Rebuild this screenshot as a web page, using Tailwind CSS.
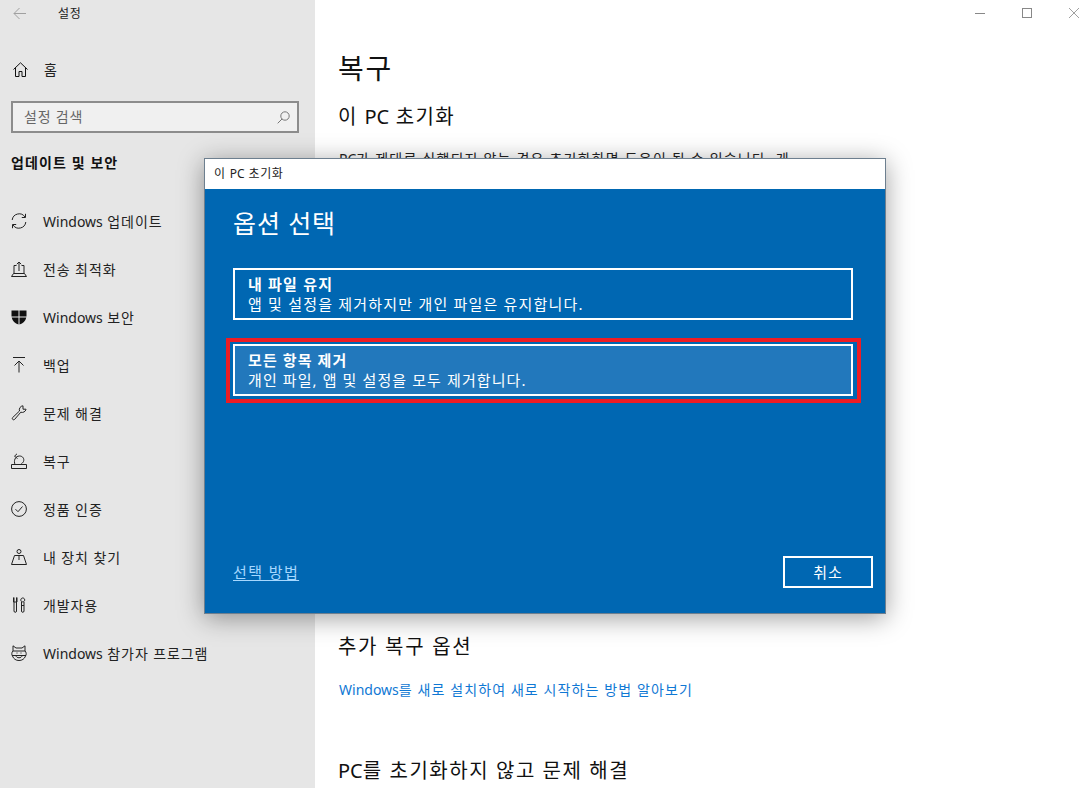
<!DOCTYPE html>
<html lang="ko">
<head>
  <meta charset="UTF-8" />
  <title>설정</title>
  <script src="https://cdn.jsdelivr.net/npm/@tailwindcss/browser@4"></script>
</head>
<body class="bg-white text-black font-['Noto_Sans','Noto_Sans_CJK_KR',sans-serif] overflow-hidden">
  <div class="relative w-[1092px] h-[793px] overflow-hidden">
    <div class="flex h-[788px]">
      <!-- sidebar -->
      <aside class="w-[315px] h-full bg-[#e6e6e6] shrink-0">
        <div class="h-[27px] flex items-center pl-[13px]">
          <svg class="w-[13px] h-[13px]" viewBox="0 0 13 13" fill="none" stroke="#a0a0a0" stroke-width="1"><path d="M13 6.5H1M6.5 1L1 6.5L6.5 12"/></svg>
          <span class="ml-[32px] text-[12px] tracking-[0.8px] text-[#222]">설정</span>
        </div>
        <div class="h-[48px] mt-[18px] flex items-center pl-[13px]">
          <svg class="w-[15px] h-[15px]" viewBox="0 0 15 15" fill="none" stroke="#111" stroke-width="1"><path d="M0.5 7.5L7.5 0.8L14.5 7.5M2.5 5.8V14.5H6V9.5H9V14.5H12.5V5.8"/></svg>
          <span class="ml-[16px] text-[14px] text-[#222]">홈</span>
        </div>
        <div class="ml-[11px] w-[288px] mt-[8px] h-[32px] border-2 border-[#8c8c8c] bg-[#f0f0f0] flex items-center justify-between pl-[11px] pr-[7px]">
          <span class="text-[14px] tracking-[0.8px] text-[#666] -mt-[2px]">설정 검색</span>
          <svg class="w-[13px] h-[13px]" viewBox="0 0 13 13" fill="none" stroke="#777" stroke-width="1"><circle cx="8" cy="5" r="4.2"/><path d="M5 8L0.7 12.3"/></svg>
        </div>
        <div class="pl-[11px] mt-[17px] h-[24px] flex items-center text-[14px] font-bold tracking-[1.1px] text-[#111]">업데이트 및 보안</div>
        <nav class="mt-[23px] text-[14px] tracking-[0.9px] text-[#222]">
          <div class="h-[48px] flex items-center pl-[11px]">
            <svg class="w-[16px] h-[16px] shrink-0" viewBox="0 0 16 16" fill="none" stroke="#222" stroke-width="1"><path d="M1.2 7A7 7 0 0 1 14 4M14.8 9A7 7 0 0 1 2 12M14.5 0.8V4.5H10.8M1.5 15.2V11.5H5.2"/></svg>
            <span class="ml-[16px]"><span class="tracking-normal">Windows</span> 업데이트</span>
          </div>
          <div class="h-[48px] flex items-center pl-[11px]">
            <svg class="w-[16px] h-[16px] shrink-0" viewBox="0 0 16 16" fill="none" stroke="#222" stroke-width="1"><path d="M0.5 15.5H15.5L13.5 12.5H13V4.5H10.5M5.5 4.5H3V12.5H2.5L0.5 15.5M3 12.5H13M8 10V1M5.8 3.2L8 1L10.2 3.2"/></svg>
            <span class="ml-[16px]">전송 최적화</span>
          </div>
          <div class="h-[48px] flex items-center pl-[11px]">
            <svg class="w-[16px] h-[16px] shrink-0" viewBox="0 0 16 16" fill="#111"><path d="M0.5 1.5H7.5V7.5H0.5ZM8.5 1.5H15.5V7.5H8.5ZM0.7 8.5H7.5V15.5C4 14.5 1.5 12 0.7 8.5ZM8.5 8.5H15.3C14.5 12 12 14.5 8.5 15.5Z"/></svg>
            <span class="ml-[16px]"><span class="tracking-normal">Windows</span> 보안</span>
          </div>
          <div class="h-[48px] flex items-center pl-[11px]">
            <svg class="w-[16px] h-[16px] shrink-0" viewBox="0 0 16 16" fill="none" stroke="#222" stroke-width="1"><path d="M2 0.5H14M8 15.5V4M3.5 8.5L8 4L12.5 8.5"/></svg>
            <span class="ml-[16px]">백업</span>
          </div>
          <div class="h-[48px] flex items-center pl-[11px]">
            <svg class="w-[16px] h-[16px] shrink-0" viewBox="0 0 16 16" fill="none" stroke="#222" stroke-width="1"><path d="M15 4.5A4 4 0 0 1 9.8 7.2L3.5 14.5C2.5 15.5 0.5 14 1.5 12.7L8.5 6A4 4 0 0 1 12 0.8V4.2H15Z"/></svg>
            <span class="ml-[16px]">문제 해결</span>
          </div>
          <div class="h-[48px] flex items-center pl-[11px]">
            <svg class="w-[16px] h-[16px] shrink-0" viewBox="0 0 16 16" fill="none" stroke="#222" stroke-width="1"><path d="M0.5 15.5V11.5H15.5V15.5ZM4 11.5C2.5 8 4 3 8.5 3C12 3 13.5 6 12.5 8.5C12 9.5 11 10.5 9.5 11.5M6 0.8L3.5 3.2L6.5 5.5"/></svg>
            <span class="ml-[16px]">복구</span>
          </div>
          <div class="h-[48px] flex items-center pl-[11px]">
            <svg class="w-[16px] h-[16px] shrink-0" viewBox="0 0 16 16" fill="none" stroke="#222" stroke-width="1"><circle cx="8" cy="8" r="7.4"/><path d="M4.5 8.2L7 10.7L11.5 5.5"/></svg>
            <span class="ml-[16px]">정품 인증</span>
          </div>
          <div class="h-[48px] flex items-center pl-[11px]">
            <svg class="w-[16px] h-[16px] shrink-0" viewBox="0 0 16 16" fill="none" stroke="#222" stroke-width="1"><circle cx="8" cy="2.5" r="2"/><path d="M0.5 15.5H15.5L12.5 6.5H3.5ZM8 6.5V11"/></svg>
            <span class="ml-[16px]">내 장치 찾기</span>
          </div>
          <div class="h-[48px] flex items-center pl-[11px]">
            <svg class="w-[16px] h-[16px] shrink-0" viewBox="0 0 16 16" fill="none" stroke="#222" stroke-width="1"><path d="M3 0.5V5M5.5 0.5V5M2.5 0.5V5H6V0.5M3 5V14C3 15.8 5.5 15.8 5.5 14V5M10.5 5V14C10.5 15.8 13 15.8 13 14V5M9.8 3C9.8 0.3 13.7 0.3 13.7 3C13.7 5.5 9.8 5.5 9.8 3M10.5 8.5H13"/></svg>
            <span class="ml-[16px]">개발자용</span>
          </div>
          <div class="h-[48px] flex items-center pl-[11px]">
            <svg class="w-[16px] h-[16px] shrink-0" viewBox="0 0 16 16" fill="none" stroke="#222" stroke-width="1"><path d="M2 0.8L5 3H11L14 0.8V6C15.5 7 15.5 10 14.5 11C13.5 14 11 15.5 8 15.5C5 15.5 2.5 14 1.5 11C0.5 10 0.5 7 2 6ZM2 6H14M1 10.5H15M5 10.5C5 13.5 11 13.5 11 10.5"/><path d="M6 7.5V8.5M10 7.5V8.5"/></svg>
            <span class="ml-[16px]"><span class="tracking-normal">Windows</span> 참가자 프로그램</span>
          </div>
        </nav>
      </aside>
      <!-- main -->
      <main class="flex-1 pl-[24px] relative">
        <div class="absolute top-0 right-[13px] flex items-center gap-[37px] h-[26px]">
          <span class="block w-[10px] h-px bg-[#888]"></span>
          <span class="block w-[10px] h-[10px] border border-[#888]"></span>
          <svg class="w-[10px] h-[10px]" viewBox="0 0 10 10" stroke="#888" stroke-width="0.8"><path d="M0 0L10 10M10 0L0 10"/></svg>
        </div>
        <h1 class="mt-[47px] -ml-[1px] h-[42px] leading-[42px] text-[28px] tracking-[1.8px] text-[#111]">복구</h1>
        <h2 class="mt-[14px] -ml-[1px] h-[28px] leading-[28px] text-[20px] tracking-[1.4px] text-[#111]">이 <span class="tracking-normal">PC</span> 초기화</h2>
        <p class="mt-[16px] h-[24px] leading-[24px] text-[14px] tracking-[1.2px] text-[#222] whitespace-nowrap"><span class="tracking-normal">PC</span>가 제대로 실행되지 않는 경우 초기화하면 도움이 될 수 있습니다. 게</p>
        <h2 class="mt-[462px] -ml-[1px] h-[28px] leading-[28px] text-[20px] tracking-[1.7px] text-[#111]">추가 복구 옵션</h2>
        <p class="mt-[18px] h-[22px] leading-[22px] text-[14px] tracking-[1.1px] text-[#0f78d4]"><span class="tracking-normal">Windows</span>를 새로 설치하여 새로 시작하는 방법 알아보기</p>
        <h2 class="mt-[56px] -ml-[1px] h-[28px] leading-[28px] text-[20px] tracking-[1.55px] text-[#111]"><span class="tracking-normal">PC</span>를 초기화하지 않고 문제 해결</h2>
      </main>
    </div>
    <!-- dialog -->
    <div class="absolute left-[204px] top-[158px] w-[682px] h-[456px] border border-[#6d7f8f] bg-[#0067b2] shadow-[0_4px_24px_rgba(0,0,0,0.38)] flex flex-col">
      <div class="h-[30px] bg-white flex items-center pl-[9px] text-[12px] tracking-[0.6px] text-[#222] shrink-0">이 <span class="tracking-normal mx-[4px]">PC</span> 초기화</div>
      <div class="flex-1 flex flex-col pl-[28px] pr-[32px] text-white">
        <h3 class="mt-[16px] h-[36px] leading-[36px] text-[25px] tracking-[0.9px]">옵션 선택</h3>
        <div class="mt-[27px] h-[52px] border-2 border-white pl-[13px] flex flex-col justify-center text-[15px] tracking-[1.2px] leading-[20px] w-[620px]">
          <span class="font-bold">내 파일 유지</span>
          <span>앱 및 설정을 제거하지만 개인 파일은 유지합니다.</span>
        </div>
        <div class="relative mt-[24px] h-[52px] border-2 border-white bg-[#2278bc] pl-[13px] flex flex-col justify-center text-[15px] tracking-[1.1px] leading-[20px] w-[620px]">
          <span class="font-bold">모든 항목 제거</span>
          <span>개인 파일, 앱 및 설정을 모두 제거합니다.</span>
          <div class="absolute -left-[9px] -top-[8px] -right-[10px] -bottom-[9px] border-4 border-[#ed1c24]"></div>
        </div>
        <div class="mt-auto mb-[25px] flex items-end justify-between">
          <span class="text-[15px] tracking-[1.4px] text-[#a6d8ff] underline underline-offset-2 leading-[24px] mb-[4px]">선택 방법</span>
          <div class="w-[90px] h-[32px] border-2 border-white flex items-center justify-center text-[15px] tracking-[1px] -mr-[20px]">취소</div>
        </div>
      </div>
    </div>
  </div>
</body>
</html>
